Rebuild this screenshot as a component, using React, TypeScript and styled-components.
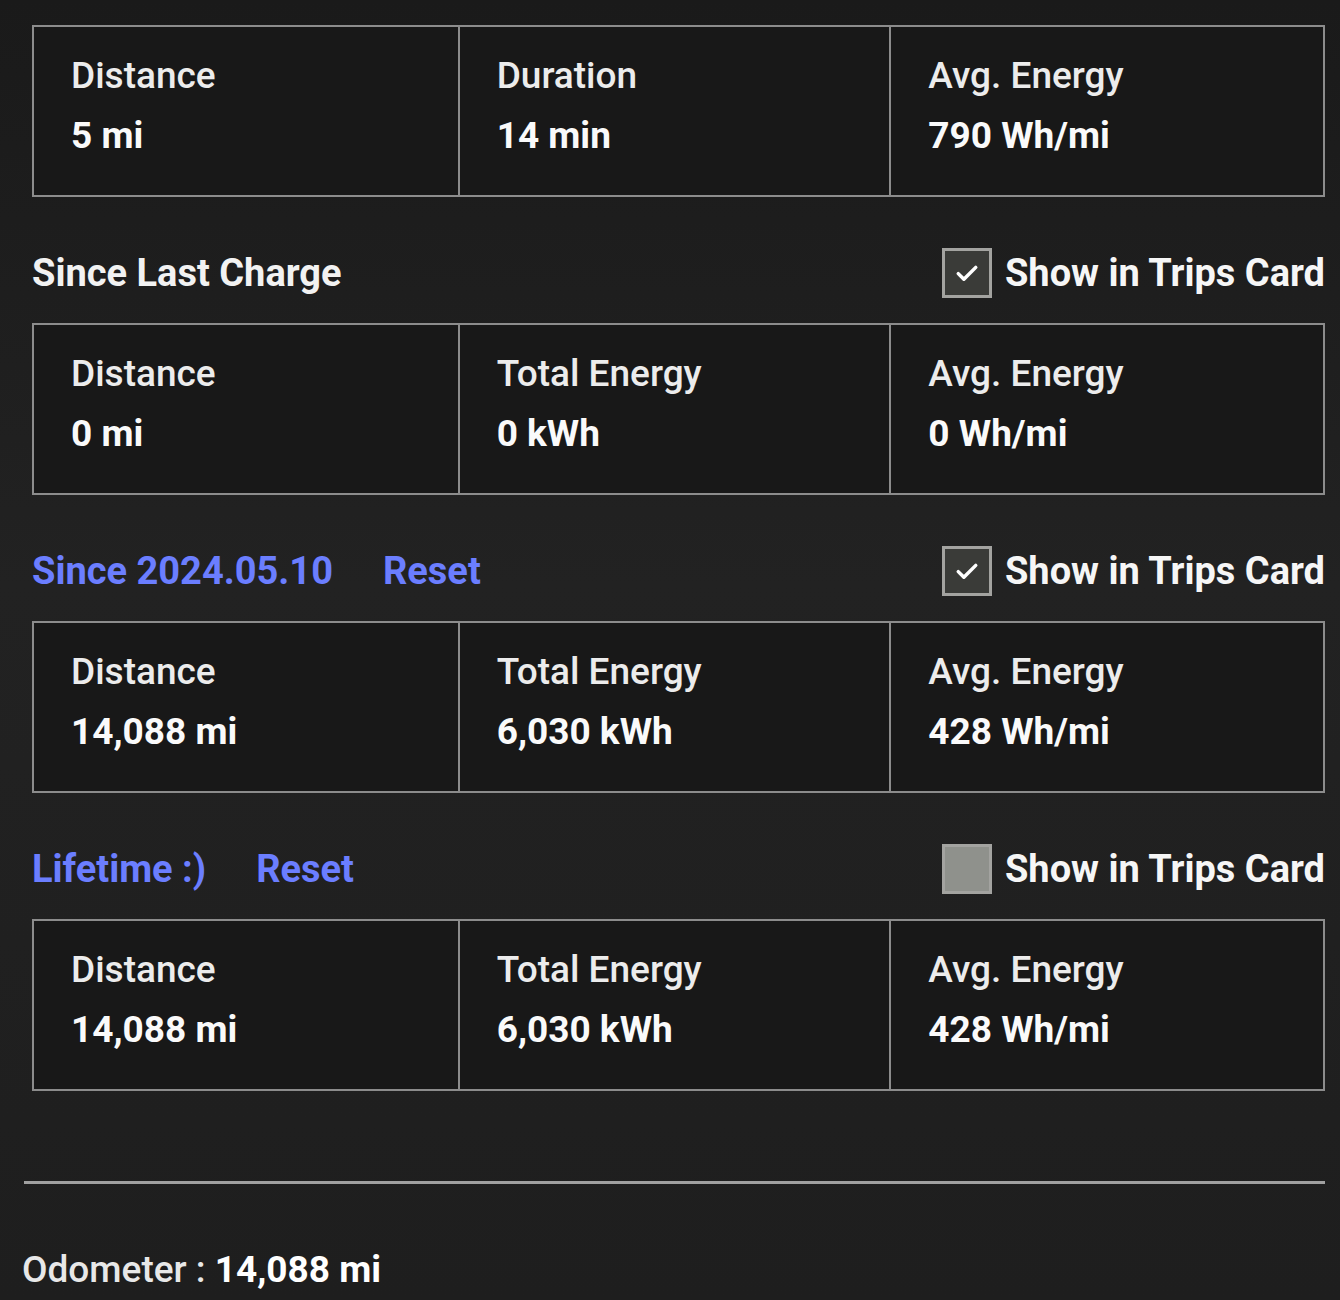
import styled, { createGlobalStyle } from "styled-components";

const GlobalStyle = createGlobalStyle`
  html, body {
    margin: 0;
    padding: 0;
    background: #1f1f1f;
  }
  body {
    font-family: Roboto, "Liberation Sans", sans-serif;
    color: #f2f2f2;
  }
`;

const Page = styled.div`
  width: 1340px;
  height: 1300px;
  box-sizing: border-box;
  padding: 25px 15px 0 32px;
  background: linear-gradient(180deg, #1a1a1a 0%, #222 45%, #1e1e1e 100%);
  overflow: hidden;
`;

const StatsCard = styled.div`
  display: grid;
  grid-template-columns: 424fr 432fr 434fr;
  border: 2px solid #8c8c8c;
  background: #181818;
  height: 172px;
  box-sizing: border-box;
`;

const Cell = styled.div<{ $first?: boolean }>`
  padding: 26px 37px 0;
  border-left: ${(p) => (p.$first ? "none" : "2px solid #8c8c8c")};
`;

const Label = styled.div`
  font-size: 37px;
  font-weight: 500;
  line-height: 46px;
  color: #ececec;
  margin-bottom: 14px;
`;

const Value = styled.div`
  font-size: 37px;
  font-weight: 700;
  line-height: 46px;
  color: #fafafa;
`;

const SectionHeader = styled.div`
  display: flex;
  align-items: center;
  justify-content: space-between;
  height: 56px;
  margin: 48px 0 22px;
`;

const TitleGroup = styled.div`
  display: flex;
  align-items: center;
  gap: 50px;
`;

const Title = styled.span<{ $link?: boolean }>`
  font-size: 38px;
  font-weight: 700;
  color: ${(p) => (p.$link ? "#6b7eff" : "#f2f2f2")};
`;

const CheckRow = styled.label`
  display: flex;
  align-items: center;
  gap: 13px;
  font-size: 38px;
  font-weight: 700;
  color: #f6f6f6;
`;

const Box = styled.span<{ $checked: boolean }>`
  width: 50px;
  height: 50px;
  box-sizing: border-box;
  border: 3px solid #a3a3a0;
  background: ${(p) => (p.$checked ? "#3a3b38" : "#8f918c")};
  display: flex;
  align-items: center;
  justify-content: center;
`;

const Divider = styled.hr`
  border: none;
  height: 3px;
  background: #a0a0a0;
  margin: 90px 0 0 -8px;
`;

const Odometer = styled.div`
  margin-top: 64px;
  margin-left: -10px;
  font-size: 37px;
  font-weight: 500;
  color: #e8e8e8;
  b {
    font-weight: 700;
    color: #fff;
  }
`;

type Stat = { label: string; value: string };

const Card = ({ stats }: { stats: Stat[] }) => (
  <StatsCard>
    {stats.map((s, i) => (
      <Cell key={s.label} $first={i === 0}>
        <Label>{s.label}</Label>
        <Value>{s.value}</Value>
      </Cell>
    ))}
  </StatsCard>
);

const Check = ({ checked }: { checked: boolean }) => (
  <CheckRow>
    <Box $checked={checked}>
      {checked && (
        <svg width="30" height="30" viewBox="0 0 24 24" fill="none">
          <path d="M5 12.5l4.5 4.5L19 7.5" stroke="#fff" strokeWidth="2.8" strokeLinecap="round" strokeLinejoin="round" />
        </svg>
      )}
    </Box>
    Show in Trips Card
  </CheckRow>
);

const totals: Stat[] = [
  { label: "Distance", value: "14,088 mi" },
  { label: "Total Energy", value: "6,030 kWh" },
  { label: "Avg. Energy", value: "428 Wh/mi" },
];

export default function App() {
  return (
    <>
      <GlobalStyle />
      <Page>
        <Card
          stats={[
            { label: "Distance", value: "5 mi" },
            { label: "Duration", value: "14 min" },
            { label: "Avg. Energy", value: "790 Wh/mi" },
          ]}
        />

        <SectionHeader>
          <Title>Since Last Charge</Title>
          <Check checked />
        </SectionHeader>
        <Card
          stats={[
            { label: "Distance", value: "0 mi" },
            { label: "Total Energy", value: "0 kWh" },
            { label: "Avg. Energy", value: "0 Wh/mi" },
          ]}
        />

        <SectionHeader>
          <TitleGroup>
            <Title $link>Since 2024.05.10</Title>
            <Title $link>Reset</Title>
          </TitleGroup>
          <Check checked />
        </SectionHeader>
        <Card stats={totals} />

        <SectionHeader>
          <TitleGroup>
            <Title $link>Lifetime :)</Title>
            <Title $link>Reset</Title>
          </TitleGroup>
          <Check checked={false} />
        </SectionHeader>
        <Card stats={totals} />

        <Divider />
        <Odometer>
          Odometer : <b>14,088 mi</b>
        </Odometer>
      </Page>
    </>
  );
}
